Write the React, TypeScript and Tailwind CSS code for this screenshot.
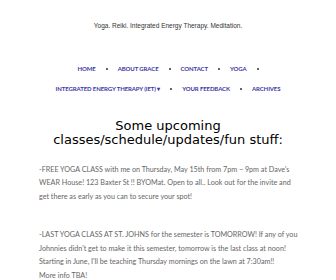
import React from 'react';

const navRow1 = ['HOME', 'ABOUT GRACE', 'CONTACT', 'YOGA'];
const navRow2 = ['INTEGRATED ENERGY THERAPY (IET) ▾', 'YOUR FEEDBACK', 'ARCHIVES'];

const Dot: React.FC = () => (
    <span className="inline-block h-[2px] w-[2px] rounded-full bg-[#333]" />
);

const NavRow: React.FC<{ items: string[]; trailingDot?: boolean }> = ({ items, trailingDot }) => (
    <div className="flex items-center justify-center gap-x-[10px]">
        {items.map((item, i) => (
            <React.Fragment key={item}>
                {i > 0 && <Dot />}
                <a className="font-bold text-[#3b36a3]">{item}</a>
            </React.Fragment>
        ))}
        {trailingDot && <Dot />}
    </div>
);

const App: React.FC = () => {
    return (
        <div className="h-[280px] w-[336px] overflow-hidden bg-white">
            <p className="pt-[21px] text-center text-[6.5px] text-[#333]" style={{ fontFamily: '"Liberation Sans", sans-serif' }}>
                Yoga. Reiki. Integrated Energy Therapy. Meditation.
            </p>

            <nav className="mt-[34px] flex flex-col gap-y-[12px] text-[6px] leading-[8px] tracking-[-0.1px]" style={{ fontFamily: 'Lato, sans-serif' }}>
                <NavRow items={navRow1} trailingDot />
                <NavRow items={navRow2} />
            </nav>

            <h2 className="mt-[26px] text-center text-[13px] leading-[14px] text-black" style={{ fontFamily: '"DejaVu Sans", sans-serif' }}>
                Some upcoming<br />classes/schedule/updates/fun stuff:
            </h2>

            <div className="ml-[39px] mt-[16px] w-[280px] text-[7.2px] leading-[13.5px] text-[#666]" style={{ fontFamily: 'Lato, sans-serif' }}>
                <p>
                    -FREE YOGA CLASS with me on Thursday, May 15th from 7pm ~ 9pm at Dave's<br />
                    WEAR House! 123 Baxter St !! BYOMat. Open to all.. Look out for the invite and<br />
                    get there as early as you can to secure your spot!
                </p>
                <p className="mt-[25px]">
                    -LAST YOGA CLASS AT ST. JOHNS for the semester is TOMORROW! If any of you<br />
                    Johnnies didn't get to make it this semester, tomorrow is the last class at noon!<br />
                    Starting in June, I'll be teaching Thursday mornings on the lawn at 7:30am!!<br />
                    More info TBA!
                </p>
            </div>
        </div>
    );
};

export default App;
